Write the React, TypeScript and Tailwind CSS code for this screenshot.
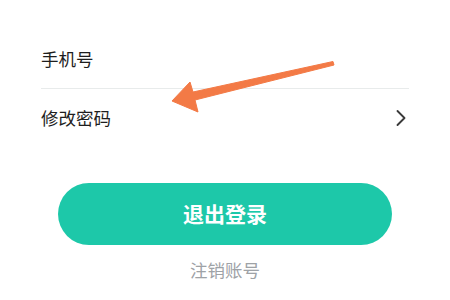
import { ChevronRight } from 'lucide-react';

const font = { fontFamily: '"Noto Sans CJK SC", "Noto Sans", sans-serif' };

function Arrow() {
  return (
    <svg className="absolute left-0 top-0 pointer-events-none" width="450" height="300" viewBox="0 0 450 300">
      <polygon
        points="172,101 190,82 193,92 333,61.5 334,65 195,100 198,112"
        fill="#f37a46"
        stroke="#f37a46"
        strokeWidth="1"
        strokeLinejoin="round"
      />
    </svg>
  );
}

export default function App() {
  return (
    <div className="relative w-[450px] h-[300px] overflow-hidden bg-white" style={font}>
      <div className="pt-[30px] px-[41px]">
        <div className="h-[59px] flex items-center border-b border-[#e8ebeb] text-[17.5px] text-[#1e1e1e]">
          手机号
        </div>
        <div className="h-[58px] flex items-center justify-between text-[17.5px] text-[#1e1e1e]">
          <span>修改密码</span>
          <ChevronRight className="w-[28px] h-[28px] text-[#3a3a3a] -mr-[6px]" strokeWidth={1.6} />
        </div>
      </div>
      <div className="mt-[36px] px-[58px]">
        <button className="w-full h-[62px] rounded-full bg-[#1dc8a9] text-white text-[21px] font-bold">
          退出登录
        </button>
      </div>
      <div className="mt-[12px] text-center text-[17.5px] text-[#9ea2a6]">注销账号</div>
      <Arrow />
    </div>
  );
}
